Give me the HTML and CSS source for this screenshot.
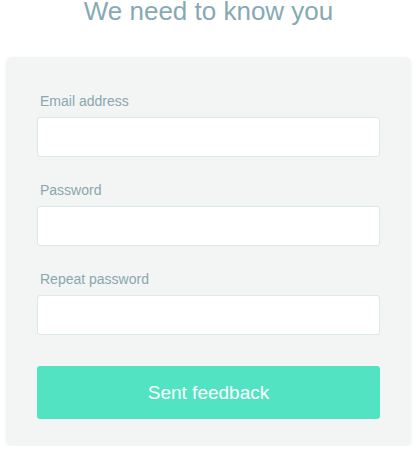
FILE: index.html
```html
<!DOCTYPE html>
<html>
<head>
<meta charset="utf-8">
<link rel="stylesheet" href="styles.css">
</head>
<body>
<h1 class="title">We need to know you</h1>
<form class="card">
  <div class="field">
    <label class="label">Email address</label>
    <input class="input" type="text">
  </div>
  <div class="field">
    <label class="label">Password</label>
    <input class="input" type="password">
  </div>
  <div class="field">
    <label class="label">Repeat password</label>
    <input class="input" type="password">
  </div>
  <button class="button" type="button">Sent feedback</button>
</form>
</body>
</html>
```
FILE: styles.css
```css
* { box-sizing: border-box; }
html, body { margin: 0; padding: 0; background: #ffffff; }
body { font-family: "Liberation Sans", Arial, sans-serif; }
.title {
  margin: 0;
  height: 57px;
  font-size: 26px;
  line-height: 22px;
  font-weight: normal;
  color: #86aab3;
  text-align: center;
}
.card {
  margin: 0 6px;
  padding: 36px 31px 27px;
  background: #f3f5f4;
  border-radius: 6px;
  box-shadow: 0 1px 4px rgba(0,0,0,0.06);
  display: flex;
  flex-direction: column;
}
.field {
  display: flex;
  flex-direction: column;
  gap: 7px;
  margin-bottom: 25px;
}
.field:last-of-type { margin-bottom: 31px; }
.label {
  font-size: 14px;
  line-height: 17px;
  color: #89a7ae;
  padding-left: 3px;
}
.input {
  height: 40px;
  border: 1px solid #d9e8e8;
  border-radius: 3px;
  background: #fff;
  margin: 0;
}
.button {
  height: 53px;
  border: none;
  border-radius: 3px;
  background: #52e3c2;
  color: #fff;
  font-family: "Liberation Sans", Arial, sans-serif;
  font-size: 19px;
  margin: 0;
}
```
